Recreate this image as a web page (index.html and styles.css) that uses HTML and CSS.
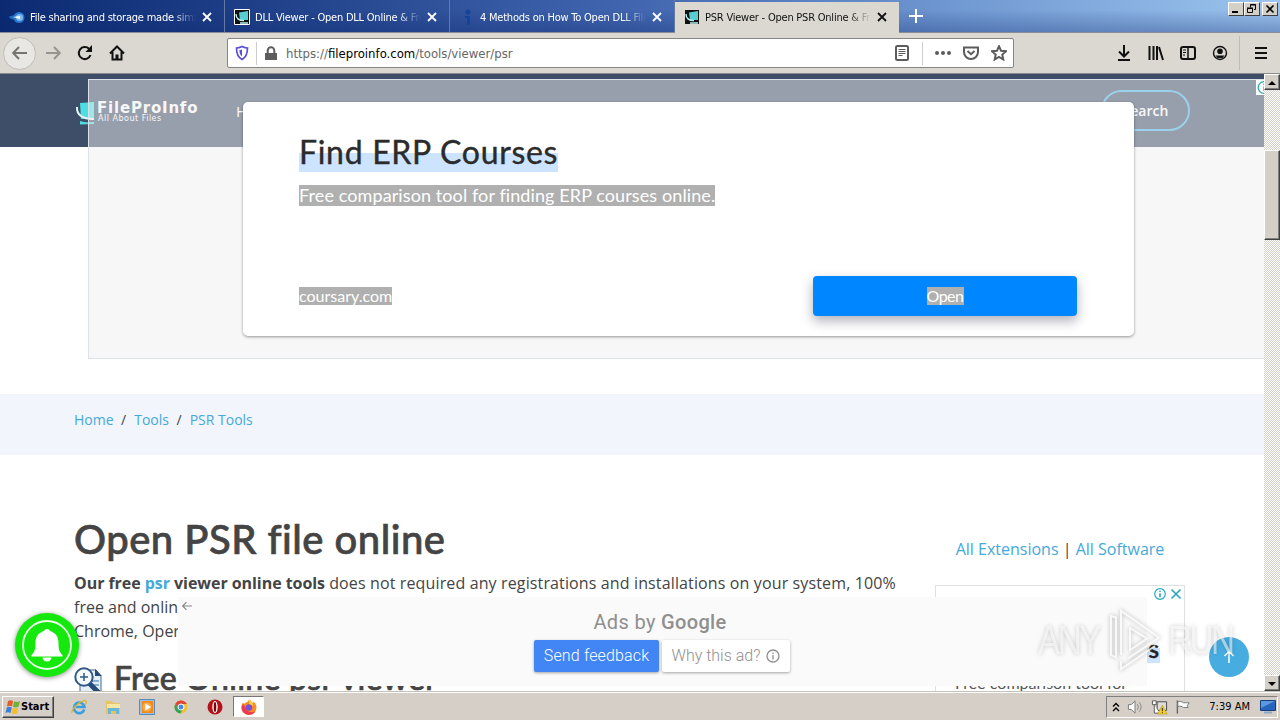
FILE: index.html
```
<!DOCTYPE html>
<html lang="en">

<head>
    <meta charset="UTF-8">
    <meta name="viewport" content="width=device-width, initial-scale=1.0">
    <title>PSR Viewer - Open PSR Online</title>
    <link rel="stylesheet" href="styles.css">
</head>

<body>
    <div class="tab-bar">
        <div class="tab">
            <svg class="favicon" viewBox="0 0 16 16"><path d="M0 7.500 6 6v5L1 9.500z" fill="#1c6fc4"/><circle cx="10" cy="8.500" r="5.500" fill="#2878d0"/><circle cx="10.500" cy="8.500" r="3.500" fill="#7db9ec"/><path d="M4 8l7-1v3z" fill="#fff"/></svg>
            <span class="tab-title">File sharing and storage made simple</span>
            <svg class="close" viewBox="0 0 10 10"><path d="M1 1l8 8M9 1L1 9"/></svg>
        </div>
        <div class="tab">
            <svg class="favicon" viewBox="0 0 16 16"><path d="M.5.500h15v15H.500z" fill="#111" stroke="#fff"/><path d="M5 3.500 14 2v9H6z" fill="#58cdd2"/><path d="M2 5c0 5 3 6.500 8 6.500M6 14h8" fill="none" stroke="#b8eff0" stroke-width="1.400"/></svg>
            <span class="tab-title">DLL Viewer - Open DLL Online &amp; Free</span>
            <svg class="close" viewBox="0 0 10 10"><path d="M1 1l8 8M9 1L1 9"/></svg>
        </div>
        <div class="tab">
            <svg class="favicon" viewBox="0 0 16 16"><circle cx="9" cy="3" r="2.500" fill="#14449c"/><path d="M6 7h5v9H8V9H6z" fill="#14449c"/></svg>
            <span class="tab-title">4 Methods on How To Open DLL Files</span>
            <svg class="close" viewBox="0 0 10 10"><path d="M1 1l8 8M9 1L1 9"/></svg>
        </div>
        <div class="tab active">
            <svg class="favicon" viewBox="0 0 16 16"><path d="M1 1h14v14H1z" fill="#111"/><path d="M5 3.500 14 2v9H6z" fill="#58cdd2"/><path d="M2 5c0 5 3 6.500 8 6.500M6 14h8" fill="none" stroke="#b8eff0" stroke-width="1.400"/></svg>
            <span class="tab-title">PSR Viewer - Open PSR Online &amp; Free</span>
            <svg class="close" viewBox="0 0 10 10"><path d="M1 1l8 8M9 1L1 9"/></svg>
        </div>
        <svg class="new-tab" viewBox="0 0 14 14"><path d="M7 0v14M0 7h14"/></svg>
        <div class="window-buttons">
            <span class="win-btn"><svg viewBox="0 0 12 10"><path d="M2 8h6" stroke-width="2"/></svg></span>
            <span class="win-btn"><svg viewBox="0 0 12 10"><path d="M4.500 3.500v-3h5v5H8M4 1h6M1.500 4.500h5v4h-5zM1 4h6"/></svg></span>
            <span class="win-btn win-close"><svg viewBox="0 0 12 10"><path d="M2.500 1.500l7 7M9.500 1.500l-7 7" stroke-width="1.600"/></svg></span>
        </div>
    </div>

    <div class="toolbar">
        <div class="nav-buttons">
            <span class="back"><svg viewBox="0 0 16 16"><path d="M15 8H1.500M7 2 1.200 8 7 14"/></svg></span>
            <svg class="forward" viewBox="0 0 16 16"><path d="M1 8h13.500M9 2l5.800 6L9 14"/></svg>
            <svg class="reload" viewBox="0 0 16 16"><path d="M13.500 10A6 6 0 1 1 12 3.800"/><path d="M15 0v7H8.500z" class="solid"/></svg>
            <svg class="home" viewBox="0 0 16 16"><path d="M1 8.500 8 1.500l7 7M3.500 7v7.500h9V7"/><path d="M6.500 15V9.500h3V15z" class="solid"/></svg>
        </div>
        <div class="url-bar">
            <svg class="shield" viewBox="0 0 14 16"><path d="M7 1.500C5 2.500 3.500 3 1.500 3c0 5.500 1 9 5.500 11.500 4.500-2.500 5.500-6 5.500-11.500-2 0-3.500-.500-5.500-1.500z" fill="none" stroke="#5a4fd8" stroke-width="1.700"/><path d="M7 4.500v7C5 10 4.500 8 4.400 5.300z" fill="#5a4fd8" stroke="none"/></svg>
            <i class="divider"></i>
            <svg class="lock" viewBox="0 0 12 15"><path d="M0 7h12v7H0z" fill="#5c5c5c" stroke="none"/><path d="M2.700 8V4.500a3.300 3.300 0 0 1 6.600 0V8" fill="none" stroke="#5c5c5c" stroke-width="2"/></svg>
            <div class="url">https://<b>fileproinfo.com</b>/tools/viewer/psr</div>
            <svg class="reader" viewBox="0 0 16 16"><rect x="2" y="1" width="12" height="14" rx="1.500"/><path d="M4.500 4.500h7M4.500 6.500h7M4.500 8.500h7M4.500 10.500h4" stroke-width="1"/></svg>
            <i class="divider right"></i>
            <svg class="dots" viewBox="0 0 16 16"><circle cx="2" cy="8" r="2"/><circle cx="8" cy="8" r="2"/><circle cx="14" cy="8" r="2"/></svg>
            <svg class="pocket" viewBox="0 0 16 16"><path d="M1 2.500h14V7A7 7 0 0 1 1 7z"/><path d="M4.500 6 8 9.200 11.500 6"/></svg>
            <svg class="star" viewBox="0 0 16 16"><path d="M8 1.200l2 4.500 5 .500-3.700 3.400 1 4.900L8 12l-4.300 2.500 1-4.900L1 6.200l5-.500z"/></svg>
        </div>
        <div class="tools">
            <svg viewBox="0 0 16 16"><path d="M8 0v11M3 6.500l5 5 5-5M2 15h12"/></svg>
            <svg viewBox="0 0 16 16"><path d="M1.500 1v14M5.500 1v14M9 1v14M11 2l4 13"/></svg>
            <svg viewBox="0 0 16 16"><rect x="1" y="2" width="14" height="12" rx="2"/><path d="M8 2v12" stroke-width="1.500"/><path d="M3 5h3M3 7.500h3M3 10h2" stroke-width="1"/></svg>
            <svg viewBox="0 0 16 16"><circle cx="8" cy="8" r="6.500" stroke-width="1.400"/><circle cx="8" cy="6.200" r="2.800" class="solid"/><path d="M3.500 10.500h9L10.500 13h-5z" class="solid"/></svg>
            <i class="tool-line"></i>
            <svg viewBox="0 0 16 16"><path d="M2 3h12M2 8h12M2 13h12"/></svg>
        </div>
    </div>

    <div class="viewport">
        <div class="page">
            <header class="site-header">
                <svg class="logo-icon" viewBox="0 0 20 24"><path d="M5 2 19 1v16L6 18z" fill="#4cdfe2"/><path d="M5 20c4 1.500 9 1.500 14 1v2L5 23.500z" fill="#4cdfe2"/><path d="M2 6C1.500 14 8 18.500 19 18" fill="none" stroke="#e8f4fb" stroke-width="2"/></svg>
                <div class="logo">
                    <span class="logo-name">FileProInfo</span>
                    <span class="logo-tag">All About Files</span>
                </div>
                <a class="nav-link">Home</a>
                <a class="search-btn">Search</a>
            </header>

            <div class="breadcrumbs">
                <a>Home</a><span>/</span><a>Tools</a><span>/</span><a>PSR Tools</a>
            </div>

            <main class="content">
                <section class="article">
                    <h1>Open PSR file online</h1>
                    <p><strong>Our free <a>psr</a> viewer online tools</strong> <span class="line-one">does not required any registrations and installations on your system, 100%</span><br>free and online. It works on all modern browsers<br>Chrome, Opera and Firefox.</p>
                    <h2>
                        <svg viewBox="0 0 28 28"><path d="M6 3h16l5 6v19H6z" fill="#e4eff8" stroke="#44698f"/><path d="M21 2v7h7z" fill="#274c77"/><path d="M18 14h7M20 18h5M8 25h8" stroke="#6c9bc6" stroke-width="1.500"/><path d="M15 16l12 12" stroke="#274c77" stroke-width="5"/><circle cx="10" cy="10" r="8.700" fill="#f3f9fd" stroke="#315983" stroke-width="2"/><path d="M10 6v8M6 10h8" stroke="#315983" stroke-width="1.500"/></svg>
                        <span>Free Online psr viewer</span>
                    </h2>
                </section>
                <aside class="sidebar">
                    <div class="side-links"><a>All Extensions</a> | <a>All Software</a></div>
                    <div class="side-ad">
                        <div class="side-ad-icons">
                            <svg viewBox="0 0 12 12"><circle cx="6" cy="6" r="5.300"/><path d="M6 5.300V9.200M6 2.700v1.400" stroke-width="1.600"/></svg>
                            <svg viewBox="0 0 12 12"><path d="M1.500 1.500l9 9M10.500 1.500l-9 9" stroke-width="1.700"/></svg>
                        </div>
                        <div class="side-ad-title"><span>Find ERP Courses</span></div>
                        <div class="side-ad-text">Free comparison tool for</div>
                    </div>
                </aside>
            </main>

            <!-- large ad over the header -->
            <div class="top-ad">
                <svg class="ad-info" viewBox="0 0 15 15"><circle cx="8" cy="7.500" r="5.800"/><path d="M8 6.500V11M8 3.500v1.800"/></svg>
                <div class="ad-card">
                    <div class="ad-title"><span>Find ERP Courses</span></div>
                    <div class="ad-desc"><span>Free comparison tool for finding ERP courses online.</span></div>
                    <div class="ad-footer">
                        <span class="ad-domain">coursary.com</span>
                        <div class="ad-open"><span>Open</span></div>
                    </div>
                </div>
            </div>

            <div class="bottom-ad">
                <svg class="bottom-back" viewBox="0 0 10 10"><path d="M10 5H1M4.500 1.200.700 5l3.800 3.800"/></svg>
                <div class="ads-by">Ads by <b>Google</b></div>
                <div class="ad-buttons">
                    <div class="feedback"><span>Send feedback</span></div>
                    <div class="why"><span>Why this ad?</span><svg viewBox="0 0 14 14"><circle cx="7" cy="7" r="6"/><path d="M7 6v4.500M7 3.500V5"/></svg></div>
                </div>
            </div>

            <div class="bell">
                <svg viewBox="0 0 64 64"><circle cx="32" cy="32" r="24" fill="none" stroke="#eaffea" stroke-width="1.800"/><path d="M32 16c2 0 2.500 1 3 2 6 2 8.500 6 8.500 12 0 7 1 9 4 12v1.500h-31V42c3-3 4-5 4-12 0-6 2.500-10 8.500-12 .500-1 1-2 3-2z" fill="#fff"/><path d="M27.500 44.500h9a4.500 4 0 0 1-9 0z" fill="#fff"/></svg>
            </div>
            <div class="to-top"><svg viewBox="0 0 14 14"><path d="M7 13V1.500M2.500 6 7 1.500 11.500 6"/></svg></div>

            <div class="watermark">
                <span>ANY</span>
                <svg viewBox="0 0 56 64"><path d="M13 47V3l38 26.500-31 21M8 9.500v40L3 47V8zM22 20v22l17-11.500zM13 53v8l34-23"/></svg>
                <span>RUN</span>
            </div>
        </div>
        <div class="scrollbar">
            <span class="scroll-btn"><svg viewBox="0 0 8 4"><path d="M0 4l4-4 4 4z"/></svg></span>
            <span class="thumb"></span>
            <span class="scroll-btn down"><svg viewBox="0 0 8 4"><path d="M0 0l4 4 4-4z"/></svg></span>
        </div>
    </div>

    <div class="taskbar">
        <div class="start">
            <svg viewBox="0 0 16 16"><path d="M3 2c2-1 3-1 5 0L7 7.500c-2-1-3-1-5 0z" fill="#e65a28"/><path d="M9 2.300c2 1 4 1 6 0l-1.500 5.500c-2 1-4 1-5.500 0z" fill="#6db33a"/><path d="M1.800 8.500c2-1 3-1 5 0L5.500 14c-2-1-3-1-5 0z" fill="#3d7fd6"/><path d="M7.800 8.800c2 1 3.500 1 5.500 0L12 14.300c-2 1-4 1-5.500 0z" fill="#f5bd2c"/></svg>
            <span>Start</span>
        </div>
        <div class="launchers">
            <svg viewBox="0 0 16 16"><path d="M13.300 10.500A5.300 5.300 0 1 1 13.500 8H5" fill="none" stroke="#3b9fdd" stroke-width="2.600"/><path d="M1 14C0 10 11 0 15 2c1 1-.500 3-1 4" fill="none" stroke="#dfb42c" stroke-width="1.200"/></svg>
            <svg viewBox="0 0 16 16"><path d="M1 2h6l1 2h7v11H1z" fill="#e5c464"/><path d="M2 5h13v4H2z" fill="#f6e7a5"/><path d="M3 9h11v6h-3v-3H6v3H3z" fill="#68b6d8"/></svg>
            <svg viewBox="0 0 16 16"><path d="M.5.500h15v15H.500z" fill="#9bbfe2" stroke="#5b8abb"/><path d="M3 2h11v12H3z" fill="#f08b1c"/><circle cx="8" cy="8" r="4.500" fill="#f7ac4c"/><path d="M6.300 4.500v7L12 8z" fill="#fff"/></svg>
            <svg viewBox="0 0 16 16"><circle cx="8" cy="8" r="6.500" fill="#f1c232"/><path d="M2.300 4.800A6.500 6.500 0 0 1 13.800 5H8L5 9z" fill="#dc4437"/><path d="M2.200 4.900A6.500 6.500 0 0 0 7.500 14.500L10 9.500 5 9z" fill="#37a358"/><circle cx="8" cy="8" r="3" fill="#4b86ed" stroke="#fff"/></svg>
            <svg viewBox="0 0 16 16"><circle cx="8" cy="8" r="7.500" fill="#b31017"/><ellipse cx="8" cy="8" rx="2.700" ry="6" fill="#fff"/><ellipse cx="8" cy="8" rx="1.300" ry="5" fill="#750509"/></svg>
        </div>
        <div class="task-active">
            <svg viewBox="0 0 16 16"><path d="M8 .500c2 1 3 2 3.500 3.500 1-.500 1-1 1-1.500 2 2 3 4 3 6a7.500 7.500 0 0 1-15 0c0-2 .500-4 1.500-5l1 1.500C4.500 3.500 7.500 3 8 .500z" fill="#fb8b22"/><path d="M.5 8a7.500 7.500 0 0 0 14 4c-4 3-10 0-10-4L2 5z" fill="#ed3c50"/><path d="M8 .500c2 1 4 3 4 6H8z" fill="#ffd23c"/><circle cx="8" cy="8.500" r="3.200" fill="#7650d6"/></svg>
        </div>
        <div class="tray">
            <svg class="chevrons" viewBox="0 0 8 10"><path d="M1 4.500 4 1.500l3 3M1 9l3-3 3 3"/></svg>
            <svg viewBox="0 0 18 16"><path d="M1.500 5.500h3l4-4v13l-4-4h-3z" fill="#fff" stroke="#777"/><path d="M11 5q2 3 0 6M13 3q4 5 0 10" fill="none" stroke="#888"/></svg>
            <svg viewBox="0 0 18 16"><path d="M6.500 2.500h10v9h-10z" fill="#ddd" stroke="#444"/><path d="M1.500 1.500h4v4h-4zM3.500 6v8.500H9" fill="#fff" stroke="#555"/><path d="M12 6l5 9.500H7z" fill="#f6d128" stroke="#a88507" stroke-width=".5"/><path d="M12 9v3.500M12 13.500v1" stroke="#222"/></svg>
            <svg viewBox="0 0 18 16"><path d="M2.500 1v14" stroke="#666" stroke-width="1.500"/><path d="M3 2.500c3-1 4 0 6 1h6l-2 3 1 2H9c-2-1-3-2-6-1z" fill="#fff" stroke="#777"/></svg>
            <span class="clock">7:39 AM</span>
            <svg class="desktop" viewBox="0 0 16 14"><path d="M.5.500h15v10H.500z" fill="#2764bd" stroke="#173f7f"/><path d="M1 1h14L1 8z" fill="#5b98df"/><path d="M4 11.500h8v2H4z" fill="#8baac9"/></svg>
        </div>
    </div>
</body>

</html>
```
FILE: styles.css
```
* {
    box-sizing: border-box;
}

body {
    margin: 0;
    width: 1280px;
    height: 720px;
    overflow: hidden;
    display: flex;
    flex-direction: column;
    background: #fff;
    font-family: "Open Sans", sans-serif;
    color: #444;
}

svg {
    display: block;
    flex: none;
}

/* tabs */
.tab-bar {
    height: 33px;
    flex: none;
    display: flex;
    background: linear-gradient(to bottom, rgba(10, 36, 106, 0) 30%, rgba(10, 36, 106, 0.3)), linear-gradient(to right, #0b2a72, #24468f 25%, #4267b0 50%, #7199d2 75%, #9cc4ee);
    border-bottom: 1px solid #8b8e96;
}

.tab {
    width: 225px;
    height: 32px;
    display: flex;
    align-items: center;
    padding: 2px 12px 0 9px;
    border-right: 1px solid #6579a5;
    color: #fff;
    stroke: #fff;
}

.tab.active {
    width: 224px;
    height: 32px;
    margin-top: 2px;
    padding: 0 11px 2px 9px;
    background: #dad8d1;
    border-right: none;
    color: #111;
    stroke: #111;
}

.favicon {
    width: 16px;
    height: 16px;
    stroke: none;
}

.tab-title {
    width: 166px;
    margin: 0 6px 0 5px;
    overflow: hidden;
    white-space: nowrap;
    font: 11px "DejaVu Sans Condensed", "DejaVu Sans", sans-serif;
    letter-spacing: -0.22px;
    stroke: none;
    -webkit-mask-image: linear-gradient(to right, #000 86%, transparent);
    mask-image: linear-gradient(to right, #000 86%, transparent);
}

.close {
    width: 10px;
    height: 10px;
    stroke-width: 1.8;
}

.new-tab {
    width: 14px;
    height: 14px;
    margin: 9px 0 0 10px;
    stroke: #fff;
    stroke-width: 2;
}

.window-buttons {
    display: flex;
    margin: 2px 2px 0 auto;
}

.win-btn {
    width: 16px;
    height: 14px;
    padding: 1px;
    background: #d4d0c8;
    border: 1px solid;
    border-color: #fff #404040 #404040 #fff;
}

.win-btn svg {
    width: 12px;
    height: 10px;
    fill: none;
    stroke: #000;
}

.win-close {
    margin-left: 2px;
}

/* navigation toolbar */
.toolbar {
    height: 41px;
    flex: none;
    display: flex;
    align-items: center;
    background: #dad8d1;
    border-bottom: 1px solid #8b8b8b;
}

.toolbar svg {
    width: 16px;
    height: 16px;
    fill: none;
    stroke: #111;
    stroke-width: 2;
}

.toolbar svg .solid {
    fill: #111;
    stroke: none;
}

.nav-buttons {
    width: 227px;
    display: flex;
    align-items: center;
    gap: 16px;
    padding-left: 3px;
}

.back {
    width: 33px;
    height: 33px;
    margin-right: -7px;
    display: flex;
    align-items: center;
    justify-content: center;
    border: 1px solid #bebcb8;
    border-radius: 50%;
    background: #e9e7e4;
}

.toolbar .back svg {
    stroke: #77756f;
}

.toolbar .forward {
    stroke: #96948e;
}

.url-bar {
    width: 787px;
    height: 30px;
    display: flex;
    align-items: center;
    padding: 0 6px 0 7px;
    background: #fff;
    border: 1px solid #858582;
    border-radius: 2px;
}

.toolbar .shield {
    width: 14px;
}

.divider {
    width: 1px;
    height: 23px;
    margin: 0 8px 0 7px;
    background: #ccc;
}

.toolbar .lock {
    width: 12px;
    height: 15px;
}

.url {
    flex: 1;
    margin-left: 9px;
    font: 13px "DejaVu Sans Condensed", "DejaVu Sans", sans-serif;
    color: #666;
    white-space: nowrap;
}

.url b {
    font-weight: normal;
    color: #000;
}

.toolbar .reader,
.toolbar .pocket,
.toolbar .star {
    stroke: #5c5c5c;
}

.toolbar .dots {
    fill: #5c5c5c;
    stroke: none;
}

.divider.right {
    margin: 0 12px;
}

.pocket,
.star {
    margin-left: 12px;
}

.tools {
    margin-left: auto;
    display: flex;
    align-items: center;
    gap: 16px;
    padding-right: 11px;
}

.tool-line {
    width: 1px;
    height: 34px;
    margin: 0 -3px 0 -5px;
    background: #bfbdb8;
}

/* page */
.viewport {
    height: 618px;
    flex: none;
    display: flex;
    border-bottom: 1px solid #c5c2b9;
}

.page {
    position: relative;
    width: 1264px;
    overflow: hidden;
    background: #fff;
}

.site-header {
    height: 73px;
    display: flex;
    align-items: center;
    padding: 0 74px 0 75px;
    background: #3e4e69;
    color: #fff;
}

.logo-icon {
    width: 20px;
    height: 24px;
    margin-top: 4px;
}

.logo {
    width: 139px;
    margin: 3px 0 0 2px;
    display: flex;
    flex-direction: column;
    font-family: "DejaVu Sans", sans-serif;
}

.logo-name {
    font-size: 15px;
    font-weight: bold;
    line-height: 14px;
    letter-spacing: 0.8px;
}

.logo-tag {
    margin-left: 1px;
    font-size: 8px;
    line-height: 8px;
    letter-spacing: 0.5px;
}

.nav-link {
    font-size: 15px;
}

.search-btn {
    width: 89px;
    height: 41px;
    margin-left: auto;
    border: 2px solid #47b2e4;
    border-radius: 50px;
    font-size: 14px;
    font-weight: 600;
    line-height: 37px;
    text-align: center;
}

.breadcrumbs {
    height: 61px;
    margin-top: 247px;
    padding: 16px 74px;
    background: #f2f5fc;
    font-size: 14px;
    line-height: 20px;
}

.breadcrumbs span {
    margin: 0 8px 0 7.5px;
}

.breadcrumbs a,
.side-links a,
.article a {
    color: #45a9da;
}

.content {
    display: flex;
    justify-content: space-between;
    padding: 61px 79px 0 74px;
}

.article {
    width: 840px;
    white-space: nowrap;
}

h1,
h2 {
    margin: 0;
    font-family: Lato, sans-serif;
    font-weight: 500;
    color: #444;
    -webkit-text-stroke: 0.7px #444;
}

h1 {
    margin-top: -1px;
    font-size: 40px;
    line-height: 48px;
    letter-spacing: 0.48px;
}

.article p {
    margin: 8px 0 0;
    font-size: 16px;
    line-height: 24px;
}

.article strong {
    letter-spacing: -0.05px;
}

.line-one {
    letter-spacing: 0.13px;
}

h2 {
    margin-top: 15px;
    display: flex;
    align-items: center;
    gap: 12px;
    font-size: 32px;
    line-height: 40px;
    letter-spacing: 0.3px;
}

h2 svg {
    width: 28px;
    height: 28px;
    margin-top: 5px;
}

.sidebar {
    width: 250px;
    padding-top: 21px;
}

.side-links {
    font-size: 16px;
    line-height: 24px;
    text-align: center;
    white-space: nowrap;
}

.side-ad {
    height: 200px;
    margin-top: 24px;
    border: 1px solid #e0e0e0;
    position: relative;
}

.side-ad-icons {
    display: flex;
    justify-content: flex-end;
    gap: 4px;
    padding: 2px 2px 0;
}

.side-ad-icons svg {
    width: 12px;
    height: 12px;
    fill: none;
    stroke: #28a9bd;
    stroke-width: 1.2;
}

.side-ad-title {
    margin: 33px 24px 0 0;
    text-align: right;
    font: 500 25px/30px Lato, sans-serif;
    letter-spacing: 0.8px;
    color: #222;
    -webkit-text-stroke: 0.5px #222;
}

.side-ad-title span {
    background: linear-gradient(transparent 50%, #cce4ff 50%);
}

.side-ad-text {
    margin: 8px 0 0 19px;
    font: 16px/24px Lato, sans-serif;
    color: #555;
}

/* overlays */
.top-ad {
    position: absolute;
    left: 88px;
    top: 5px;
    width: 1177px;
    height: 280px;
    background: rgba(239, 239, 239, 0.5);
    border: 1px solid #dde2ea;
    padding: 22px 0 0 154px;
}

.ad-info {
    position: absolute;
    right: -7px;
    top: 0;
    width: 15px;
    height: 15px;
    background: #fff;
    fill: none;
    stroke: #28a9bd;
    stroke-width: 1.3;
}

.ad-card {
    width: 891px;
    height: 234px;
    padding: 32px 57px 20px 56px;
    background: #fff;
    border-radius: 5px;
    box-shadow: 0 1px 3px rgba(0, 0, 0, 0.4);
    display: flex;
    flex-direction: column;
    font-family: Lato, sans-serif;
    white-space: nowrap;
}

.ad-title {
    height: 38px;
    font-size: 32px;
    line-height: 36px;
    letter-spacing: 0.7px;
    color: #2b2b2b;
    -webkit-text-stroke: 0.4px #2b2b2b;
}

.ad-title span {
    display: inline-block;
    padding-bottom: 2px;
    background: linear-gradient(transparent 50%, #cce4ff 50%);
}

.ad-desc {
    margin-top: 13px;
    font-size: 18px;
    line-height: 21px;
    letter-spacing: 0.1px;
    color: #fff;
}

.ad-desc span,
.ad-domain,
.ad-open span {
    display: inline-block;
    background: #b0b0b0;
}

.ad-footer {
    margin-top: auto;
    display: flex;
    justify-content: space-between;
    align-items: center;
    font-size: 16px;
    line-height: 18px;
    color: #fff;
}

.ad-open {
    width: 264px;
    height: 40px;
    padding-top: 11px;
    border-radius: 4px;
    background: #0087ff;
    box-shadow: 0 5px 12px rgba(30, 30, 60, 0.35);
    text-align: center;
    letter-spacing: -0.5px;
}

.bottom-ad {
    position: absolute;
    left: 178px;
    top: 523px;
    width: 969px;
    height: 89px;
    padding-top: 12px;
    background: #fafafa;
    color: #8f8f8f;
    text-align: center;
    white-space: nowrap;
}

.bottom-back {
    position: absolute;
    left: 4px;
    top: 4px;
    width: 10px;
    height: 10px;
    fill: none;
    stroke: #888;
    stroke-width: 1.2;
}

.ads-by {
    width: 964px;
    font: 20px/26px Roboto, sans-serif;
    letter-spacing: 0.35px;
}

.ads-by b {
    font-weight: 500;
}

.ad-buttons {
    display: flex;
    gap: 3px;
    margin: 5px 0 0 356px;
    font: 300 16px/32px Roboto, sans-serif;
}

.feedback,
.why {
    height: 32px;
    border-radius: 2px;
    box-shadow: 0 1px 3px rgba(0, 0, 0, 0.35);
}

.feedback {
    width: 125px;
    background: #4285f4;
    color: #fff;
    letter-spacing: 0.15px;
}

.why {
    width: 128px;
    display: flex;
    align-items: center;
    justify-content: center;
    gap: 6px;
    background: #fff;
}

.why svg {
    width: 14px;
    height: 14px;
    fill: none;
    stroke: #8f8f8f;
    stroke-width: 1.3;
}

.bell {
    position: absolute;
    left: 15px;
    top: 539px;
    width: 64px;
    height: 64px;
    border-radius: 50%;
    background: #14e80c;
    box-shadow: 0 1px 5px rgba(0, 0, 0, 0.45);
}

.to-top {
    position: absolute;
    left: 1209px;
    top: 563px;
    width: 40px;
    height: 40px;
    padding: 13px;
    border-radius: 50%;
    background: #47ade0;
}

.to-top svg {
    width: 14px;
    height: 14px;
    fill: none;
    stroke: #fff;
    stroke-width: 1.5;
}

.watermark {
    position: absolute;
    left: 1038px;
    top: 534px;
    display: flex;
    align-items: center;
    color: rgba(255, 255, 255, 0.55);
    font: 40px/64px "Liberation Sans", sans-serif;
    filter: drop-shadow(0 0 2px rgba(0, 0, 0, 0.35));
}

.watermark svg {
    width: 56px;
    height: 64px;
    margin: 0 4px;
    fill: none;
    stroke: #fff;
    stroke-width: 2;
    opacity: 0.8;
}

.watermark span {
    display: block;
    width: 66px;
    letter-spacing: -3px;
    transform: scaleX(0.83);
    transform-origin: left;
}

/* scrollbar */
.scrollbar {
    width: 16px;
    display: flex;
    flex-direction: column;
    background: repeating-conic-gradient(#d4d0c8 0 25%, #fff 0 50%) 0 0 / 2px 2px;
}

.scroll-btn,
.thumb {
    background: #d4d0c8;
    border: 1px solid;
    border-color: #fff #404040 #404040 #fff;
    box-shadow: inset -1px -1px #808080;
}

.scroll-btn {
    height: 16px;
    padding: 6px 3px;
}

.scroll-btn svg {
    width: 8px;
    height: 4px;
}

.thumb {
    height: 90px;
    margin-top: 60px;
}

.scroll-btn.down {
    margin-top: auto;
}

/* taskbar */
.taskbar {
    height: 28px;
    flex: none;
    display: flex;
    align-items: center;
    padding: 0 2px;
    background: #d6cfc7;
    border-top: 1px solid #fff;
    font: 11px "DejaVu Sans Condensed", "DejaVu Sans", sans-serif;
    color: #000;
}

.start {
    width: 52px;
    height: 22px;
    display: flex;
    align-items: center;
    padding-left: 2px;
    border: 1px solid;
    border-color: #fff #404040 #404040 #fff;
    box-shadow: inset -1px -1px #808080;
    font-weight: bold;
}

.start svg {
    width: 16px;
    height: 16px;
}

.launchers {
    display: flex;
    gap: 18px;
    margin-left: 17px;
}

.launchers svg {
    width: 16px;
    height: 16px;
}

.task-active {
    width: 31px;
    height: 21px;
    margin-left: 10px;
    padding: 2px 0 0 7px;
    background: #fff;
    border: 1px solid #777;
    border-right-color: #fff;
    border-bottom-color: #fff;
}

.task-active svg {
    width: 16px;
    height: 16px;
}

.tray {
    width: 172px;
    height: 22px;
    margin-left: auto;
    display: flex;
    align-items: center;
    gap: 7px;
    padding: 0 1px 0 5px;
    border: 1px solid;
    border-color: #808080 #fff #fff #808080;
}

.tray svg {
    width: 17px;
    height: 16px;
}

.tray .chevrons {
    width: 8px;
    height: 10px;
    fill: none;
    stroke: #000;
    stroke-width: 1.4;
}

.clock {
    margin: 0 3px 0 auto;
    white-space: nowrap;
}

.tray .desktop {
    width: 16px;
    height: 14px;
}
```
